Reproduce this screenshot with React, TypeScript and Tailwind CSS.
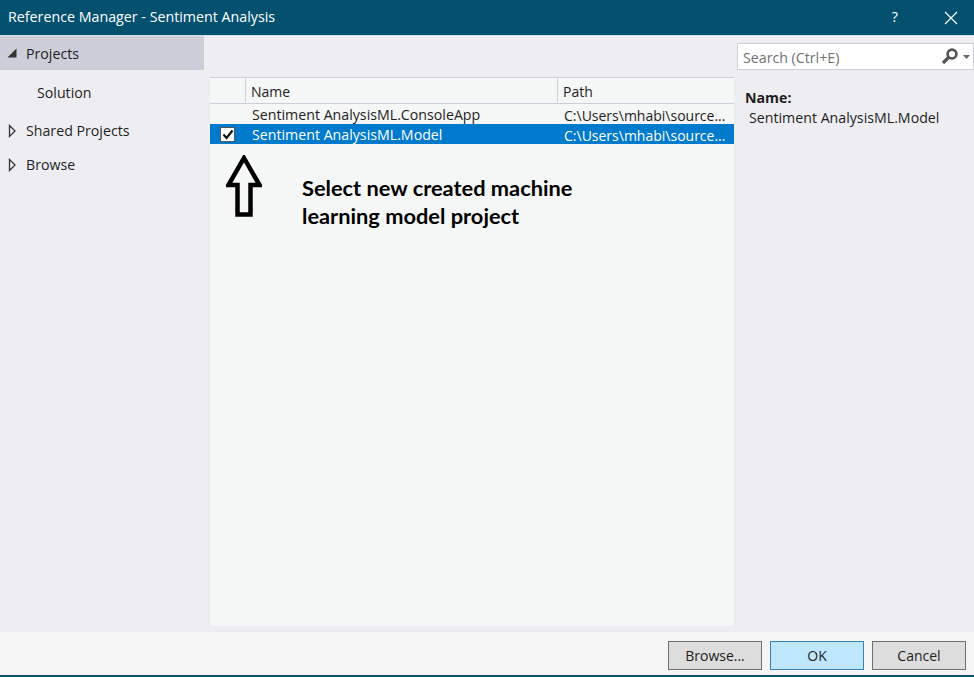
import React from 'react';
import { FC } from 'react';

const font = "font-['Open_Sans','Noto_Sans',sans-serif]";

const Caret: FC<{ open?: boolean }> = ({ open }) =>
  open ? (
    <svg width="10" height="10" viewBox="0 0 10 10" className="shrink-0">
      <path d="M9.5 0.5V9.5H0.5Z" fill="#333" />
    </svg>
  ) : (
    <svg width="10" height="14" viewBox="0 0 10 14" className="shrink-0">
      <path d="M2.5 1.5L8 7L2.5 12.5Z" fill="none" stroke="#333" strokeWidth="1.3" />
    </svg>
  );

const Sidebar: FC = () => (
  <aside className="w-[204px] shrink-0 text-[14.2px] text-[#1e1e1e]">
    <div className="h-[34px] bg-[#ccced9] flex items-center pl-[7px] gap-[9px]">
      <Caret open />
      <span className="pt-[2px]">Projects</span>
    </div>
    <div className="h-[44px] flex items-center pl-[37px] pt-[1px]">Solution</div>
    <div className="h-[24px] flex items-center pl-[7px] gap-[9px] mt-[5px]">
      <Caret />
      <span>Shared Projects</span>
    </div>
    <div className="h-[24px] flex items-center pl-[7px] gap-[9px] mt-[10px]">
      <Caret />
      <span>Browse</span>
    </div>
  </aside>
);

const Row: FC<{ selected?: boolean; name: string }> = ({ selected, name }) => (
  <div className={`h-[20px] flex items-center text-[14.2px] ${selected ? 'bg-[#007acc] text-white' : 'text-[#1e1e1e]'}`}>
    <div className="w-[42px] shrink-0 pl-[10px]">
      {selected && (
        <div className="w-[15px] h-[15px] bg-white border border-[#555] flex items-center justify-center">
          <svg width="12" height="11" viewBox="0 0 12 11">
            <path d="M1.5 5.5L4.5 9L10.5 1.5" fill="none" stroke="#111" strokeWidth="2.2" />
          </svg>
        </div>
      )}
    </div>
    <div className="w-[312px] shrink-0 pt-[2px]">{name}</div>
    <div className="flex-1 truncate pr-2 pt-[2px] text-[14px]">{'C:\\Users\\mhabi\\source...'}</div>
  </div>
);

const Table: FC = () => (
  <main className="w-[524px] ml-[6px] mt-[41px] mb-[6px] bg-[#f5f6f6] shrink-0">
    <div className="h-[27px] flex text-[14px] text-[#1e1e1e] border-y border-[#ccced9]">
      <div className="w-[36px] border-r border-[#ccced9]" />
      <div className="w-[312px] border-r border-[#ccced9] pl-[5px] pt-[2px] flex items-center">Name</div>
      <div className="flex-1 pl-[5px] pt-[2px] flex items-center">Path</div>
    </div>
    <Row name="Sentiment AnalysisML.ConsoleApp" />
    <Row selected name="Sentiment AnalysisML.Model" />
    <div className="flex pt-[11px]">
      <svg width="36" height="62" viewBox="0 0 36 62" className="ml-[16px] shrink-0">
        <path d="M18 3L33.5 30H24.5V59.5H11.5V30H2.5Z" fill="none" stroke="#000" strokeWidth="4.5" />
      </svg>
      <p className="ml-[40px] mt-[19px] text-[21.8px] leading-[28px] font-bold text-black font-['Lato',sans-serif]">
        Select new created machine
        <br />
        learning model project
      </p>
    </div>
  </main>
);

const Details: FC = () => (
  <section className="flex-1 ml-[3px] mt-[7px] text-[14.2px] text-[#1e1e1e]">
    <div className="h-[27px] w-[237px] bg-white border border-[#ccced9] flex items-center pl-[5px] text-[#717171]">
      <span className="flex-1 pt-[2px]">Search (Ctrl+E)</span>
      <svg width="19" height="17" viewBox="0 0 19 17" className="mr-[3px]">
        <circle cx="11" cy="6" r="4.4" fill="none" stroke="#555" strokeWidth="2.6" />
        <path d="M8 9L2 15" stroke="#555" strokeWidth="3.2" />
      </svg>
      <svg width="8" height="6" viewBox="0 0 8 6" className="mr-[2px]">
        <path d="M0 1H7L3.5 5Z" fill="#666" />
      </svg>
    </div>
    <div className="mt-[18px] ml-[8px] font-bold leading-[20px]">Name:</div>
    <div className="ml-[12px] leading-[20px]">Sentiment AnalysisML.Model</div>
  </section>
);

const Btn: FC<{ label: string; primary?: boolean }> = ({ label, primary }) => (
  <button
    className={`w-[94px] h-[29px] border text-[14px] text-[#1e1e1e] ${
      primary ? 'bg-[#bee6fd] border-[#3c7fb1]' : 'bg-[#dddddd] border-[#707070]'
    }`}
  >
    {label}
  </button>
);

const App: FC = () => {
  return (
    <div className={`w-[974px] h-[677px] flex flex-col bg-[#eeeef2] overflow-hidden ${font}`}>
      <header className="h-[35px] shrink-0 bg-[#04506f] text-white flex items-center pl-[8px] text-[14.25px]">
        <span className="flex-1 pb-[2px]">Reference Manager - Sentiment Analysis</span>
        <span className="mr-[46px] pb-[2px]">?</span>
        <svg width="14" height="14" viewBox="0 0 14 14" className="mr-[16px]">
          <path d="M1 1L13 13M13 1L1 13" stroke="#fff" strokeWidth="1.2" />
        </svg>
      </header>
      <div className="h-px shrink-0 bg-[#d8e4ea]" />
      <div className="flex flex-1 min-h-0">
        <Sidebar />
        <Table />
        <Details />
      </div>
      <footer className="h-[43px] shrink-0 bg-[#f5f5f6] flex items-center justify-end gap-[8px] pr-[8px] pt-[3px]">
        <Btn label="Browse..." />
        <Btn primary label="OK" />
        <Btn label="Cancel" />
      </footer>
      <div className="h-[2px] shrink-0 bg-[#04506f]" />
    </div>
  );
};

export default App;
